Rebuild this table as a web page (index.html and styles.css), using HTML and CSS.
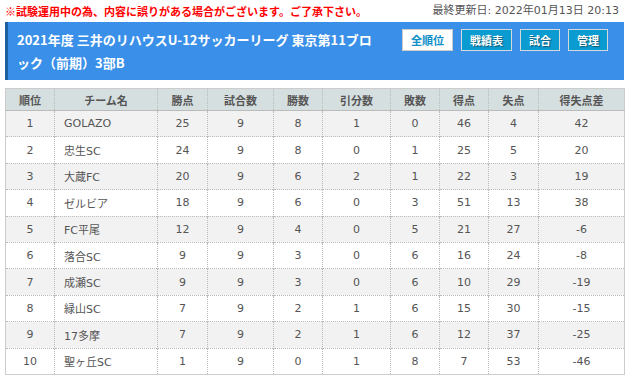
FILE: index.html
```html
<!DOCTYPE html>
<html lang="ja">
<head>
<meta charset="utf-8">
<title>順位表</title>
<link rel="stylesheet" href="styles.css">
</head>
<body>
<div class="page">
  <div class="topbar">
    <span class="notice">※試験運用中の為、内容に誤りがある場合がございます。ご了承下さい。</span>
    <span class="updated">最終更新日: 2022年01月13日 20:13</span>
  </div>
  <div class="league-head">
    <h1 class="league-title">2021年度 三井のリハウスU-12サッカーリーグ 東京第11ブロック（前期）3部B</h1>
    <div class="nav">
      <a class="btn btn-active">全順位</a>
      <a class="btn">戦績表</a>
      <a class="btn">試合</a>
      <a class="btn">管理</a>
    </div>
  </div>
  <table class="standings">
    <colgroup>
      <col class="c1"><col class="c2"><col class="c3"><col class="c4"><col class="c5">
      <col class="c6"><col class="c7"><col class="c8"><col class="c9"><col class="c10">
    </colgroup>
    <thead>
      <tr><th>順位</th><th>チーム名</th><th>勝点</th><th>試合数</th><th>勝数</th><th>引分数</th><th>敗数</th><th>得点</th><th>失点</th><th>得失点差</th></tr>
    </thead>
    <tbody>
      <tr><td>1</td><td class="team">GOLAZO</td><td>25</td><td>9</td><td>8</td><td>1</td><td>0</td><td>46</td><td>4</td><td>42</td></tr>
      <tr><td>2</td><td class="team">忠生SC</td><td>24</td><td>9</td><td>8</td><td>0</td><td>1</td><td>25</td><td>5</td><td>20</td></tr>
      <tr><td>3</td><td class="team">大蔵FC</td><td>20</td><td>9</td><td>6</td><td>2</td><td>1</td><td>22</td><td>3</td><td>19</td></tr>
      <tr><td>4</td><td class="team">ゼルビア</td><td>18</td><td>9</td><td>6</td><td>0</td><td>3</td><td>51</td><td>13</td><td>38</td></tr>
      <tr><td>5</td><td class="team">FC平尾</td><td>12</td><td>9</td><td>4</td><td>0</td><td>5</td><td>21</td><td>27</td><td>-6</td></tr>
      <tr><td>6</td><td class="team">落合SC</td><td>9</td><td>9</td><td>3</td><td>0</td><td>6</td><td>16</td><td>24</td><td>-8</td></tr>
      <tr><td>7</td><td class="team">成瀬SC</td><td>9</td><td>9</td><td>3</td><td>0</td><td>6</td><td>10</td><td>29</td><td>-19</td></tr>
      <tr><td>8</td><td class="team">緑山SC</td><td>7</td><td>9</td><td>2</td><td>1</td><td>6</td><td>15</td><td>30</td><td>-15</td></tr>
      <tr><td>9</td><td class="team">17多摩</td><td>7</td><td>9</td><td>2</td><td>1</td><td>6</td><td>12</td><td>37</td><td>-25</td></tr>
      <tr><td>10</td><td class="team">聖ヶ丘SC</td><td>1</td><td>9</td><td>0</td><td>1</td><td>8</td><td>7</td><td>53</td><td>-46</td></tr>
    </tbody>
  </table>
</div>
</body>
</html>
```
FILE: styles.css
```css
html, body {
  margin: 0;
  padding: 0;
  background: #ffffff;
}
body {
  font-family: "DejaVu Sans", "Noto Sans CJK JP", sans-serif;
  font-size: 11px;
  color: #555555;
}
.page {
  padding: 0 10px 0 5px;
}
.topbar {
  height: 22px;
  display: flex;
  justify-content: space-between;
  align-items: center;
  padding-right: 5px;
}
.notice {
  font-family: "Noto Sans CJK JP", sans-serif;
  color: #ff0000;
  font-weight: bold;
  font-size: 11px;
  line-height: 22px;
}
.updated {
  color: #555555;
  line-height: 22px;
}
.league-head {
  display: flex;
  align-items: flex-start;
  background: #3a90e8;
  border-left: 3px solid #1e5fa0;
  height: 58px;
  box-sizing: border-box;
  padding: 6px 16px 0 9px;
}
.league-title {
  margin: 0;
  width: 362px;
  font-family: "Noto Sans CJK JP", sans-serif;
  font-size: 13px;
  line-height: 23px;
  font-weight: bold;
  color: #ffffff;
}
.nav {
  margin-left: auto;
  margin-top: 1px;
  display: flex;
  gap: 8px;
}
.btn {
  display: block;
  height: 22px;
  box-sizing: border-box;
  padding: 0 8px;
  border: 1px solid #d8d8d8;
  background: #0a9bd0;
  color: #ffffff;
  font-family: "Noto Sans CJK JP", sans-serif;
  font-size: 11px;
  font-weight: bold;
  line-height: 20px;
  text-shadow: 1px 1px 1px rgba(0, 0, 0, 0.45);
}
.btn-active {
  background: #ffffff;
  color: #0a8fc8;
  border-color: #cccccc;
  text-shadow: none;
}
.standings {
  margin-top: 8px;
  width: 619px;
  table-layout: fixed;
  border-collapse: collapse;
  border: 1px solid #cccccc;
}
.c1 { width: 49px; }
.c2 { width: 103px; }
.c3 { width: 50px; }
.c4 { width: 66px; }
.c5 { width: 49px; }
.c6 { width: 68px; }
.c7 { width: 49px; }
.c8 { width: 49px; }
.c9 { width: 50px; }
.c10 { width: 86px; }
.standings th {
  background: #d5dfe0;
  font-weight: bold;
  color: #555555;
  height: 21px;
  padding: 0;
  border-left: 1px dotted #bbbbbb;
  border-bottom: 1px solid #bbbbbb;
  font-family: "Noto Sans CJK JP", sans-serif;
  font-size: 11px;
  text-align: center;
}
.standings td {
  height: 25.4px;
  padding: 0;
  text-align: center;
  border-left: 1px dotted #bbbbbb;
  border-top: 1px dotted #bbbbbb;
  color: #555555;
}
.standings th:first-child,
.standings td:first-child {
  border-left: 1px solid #cccccc;
}
.standings tbody tr:nth-child(odd) td {
  background: #f2f2f2;
}
.standings tbody tr:first-child td {
  border-top: 1px solid #bbbbbb;
}
.standings td.team {
  text-align: left;
  padding-left: 9px;
}
```
